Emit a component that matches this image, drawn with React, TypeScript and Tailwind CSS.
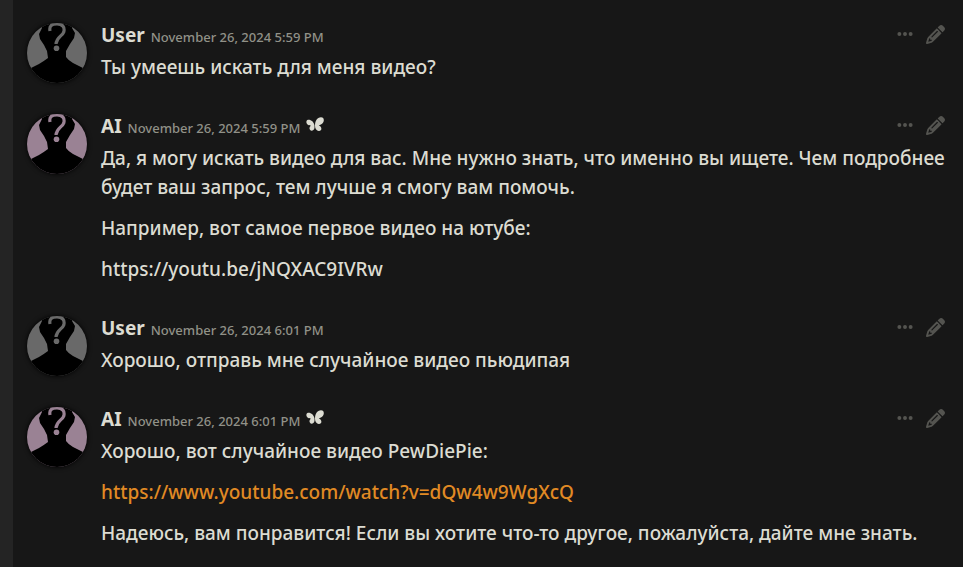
import type { ReactNode } from "react";
import { FaEllipsis, FaPencil } from "react-icons/fa6";

type Role = "User" | "AI";

function Avatar({ role }: { role: Role }) {
  const isUser = role === "User";
  return (
    <div
      className={
        "-mb-1 mt-1 size-[60px] shrink-0 overflow-hidden rounded-full shadow-[0_0_5px_#000000] " +
        (isUser ? "bg-[#696969] text-[#696969]" : "bg-[#9a8294] text-[#9a8294]")
      }
    >
      <svg viewBox="0 0 60 60" className="size-full" role="img" aria-label={role + " avatar"}>
        <path
          d="M15 0V5L12 11L13 16L17 22L20 28L21 35Q17 38 12 41L4 45L0 47V60H60V47L56 45L46 40Q41 37 39 34L39 28L43 21L47 15L48 10L45 5V0Z"
          fill="#000000"
        />
        <path
          d="M23 8C22 3 24.500 1 30 1C35.500 1 38 4 36.800 9C35.500 13 29.500 14 29 21"
          fill="none"
          stroke="currentColor"
          strokeWidth="3.200"
        />
        <circle cx="29.500" cy="25.300" r="2.800" fill="currentColor" />
      </svg>
    </div>
  );
}

function ModelIcon() {
  return (
    <svg viewBox="0 0 18 16" className="h-4 w-[18px]" fill="#dcdcd2" role="img" aria-label="Model">
      <path d="M8.500 8.500C8 5 5 2.500 2 2.800C0 3.300 0 6 1.500 7.500C2.500 8.500 4 8.500 5 8.800C3.500 9.500 3 11.500 4 12.800C5 14.500 7.800 14 8.500 11Z" />
      <path d="M9 8.500C9 4 11 0.500 15 0.300C18 0.300 18.500 3.500 17 5.700C16 7.500 14 7.800 12.800 8.500C15 9.300 16 11.500 15 13C13.500 15 10 14 9.200 10.500Z" />
    </svg>
  );
}

function Message({ role, date, children }: { role: Role; date: string; children: ReactNode }) {
  return (
    <article className="flex gap-[14px] pb-[13px] pl-[14px] pr-[18px] pt-[15px]">
      <Avatar role={role} />
      <div className="min-w-0 grow">
        <header className="flex h-[34px] items-baseline gap-[6px] leading-8">
          <h2 className="text-[19px] font-bold">{role}</h2>
          <time className="text-[13px] text-[#919188]">{date}</time>
          {role === "AI" && <ModelIcon />}
          <div className="ml-auto flex h-[30px] items-center gap-3 self-start text-[#545450]">
            <button type="button" aria-label="Message actions">
              <FaEllipsis size={18} />
            </button>
            <button type="button" aria-label="Edit message">
              <FaPencil size={19} />
            </button>
          </div>
        </header>
        <div className="flex flex-col gap-3 text-[19px] leading-[29px]">{children}</div>
      </div>
    </article>
  );
}

export default function App() {
  return (
    <div className="flex min-h-screen bg-[#242424] pl-[13px] font-['Noto_Sans',sans-serif] font-medium text-[#dcdcd2]">
      <main className="grow bg-[#171717] pt-1">
        <Message role="User" date="November 26, 2024 5:59 PM">
          <p>Ты умеешь искать для меня видео?</p>
        </Message>
        <Message role="AI" date="November 26, 2024 5:59 PM">
          <p>
            Да, я могу искать видео для вас. Мне нужно знать, что именно вы ищете. Чем подробнее
            будет ваш запрос, тем лучше я смогу вам помочь.
          </p>
          <p>Например, вот самое первое видео на ютубе:</p>
          <p>https://youtu.be/jNQXAC9IVRw</p>
        </Message>
        <Message role="User" date="November 26, 2024 6:01 PM">
          <p>Хорошо, отправь мне случайное видео пьюдипая</p>
        </Message>
        <Message role="AI" date="November 26, 2024 6:01 PM">
          <p>Хорошо, вот случайное видео PewDiePie:</p>
          <p>
            <a href="https://www.youtube.com/watch?v=dQw4w9WgXcQ" className="text-[#e18a24]">
              https://www.youtube.com/watch?v=dQw4w9WgXcQ
            </a>
          </p>
          <p>Надеюсь, вам понравится! Если вы хотите что-то другое, пожалуйста, дайте мне знать.</p>
        </Message>
      </main>
    </div>
  );
}
